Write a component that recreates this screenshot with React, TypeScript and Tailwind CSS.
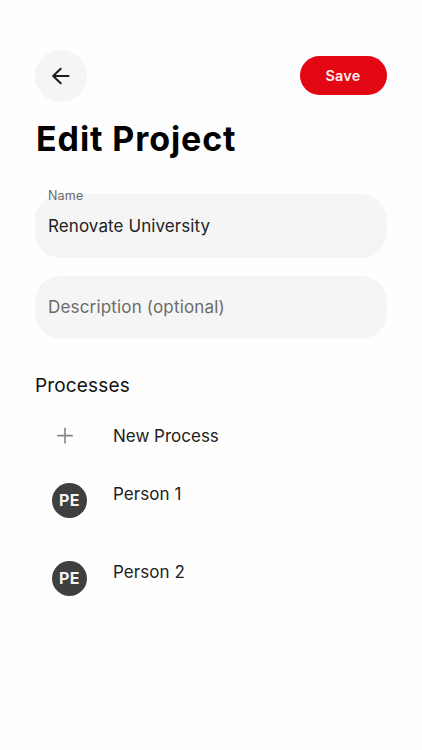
const PEOPLE = ['Person 1', 'Person 2']

export default function App() {
  return (
    <main className="h-[750px] w-[422px] bg-[#fefefe] px-[35px] pt-[50px] font-[Inter,sans-serif] text-[#222]">
      <header className="flex h-[51px] items-center justify-between">
        <button aria-label="Back" className="flex size-[52px] items-center justify-center rounded-full bg-[#f5f5f5]">
          <svg
            width="24"
            height="24"
            viewBox="0 0 24 24"
            fill="none"
            stroke="#1d1d1d"
            strokeWidth="2"
            strokeLinecap="round"
            strokeLinejoin="round"
          >
            <path d="M19.5 12H4.2M11.7 4.7L4.2 12l7.5 7.3" />
          </svg>
        </button>
        <button className="h-[39px] w-[87px] rounded-full bg-[#e30613] pr-px text-[14.5px] font-semibold tracking-[0.2px] text-white/95">
          Save
        </button>
      </header>
      <h1 className="mt-[16px] pl-px text-[34px] leading-[44px] font-[670] tracking-[0.9px] text-black">Edit Project</h1>
      <div className="mt-[33px] h-[64px] rounded-[26px] bg-[#f5f5f5] px-[13px]">
        <label className="block h-[20px] -translate-y-[7px] text-[12.5px] leading-[17px] tracking-[0.2px] text-[#6b6b6b]">
          Name
        </label>
        <p className="pt-px text-[17px] leading-[22px] font-[380] tracking-[0.09px]">Renovate University</p>
      </div>
      <div className="mt-[18px] flex h-[63px] items-center rounded-[26px] bg-[#f5f5f5] px-[13px] pt-px text-[17px] font-[380] tracking-[0.17px] text-[#6b6b6b]">
        Description (optional)
      </div>
      <h2 className="mt-[35px] text-[19px] leading-[24px] font-[380] tracking-[0.15px] text-[#111]">Processes</h2>
      <div className="mt-[26px] flex h-[24px] items-center">
        <svg className="mr-[35px] ml-[17px]" width="26" height="26" viewBox="0 0 26 26" stroke="#858585" strokeWidth="1.6">
          <path d="M5.2 12.6h15.6M13 4.8v15.6" />
        </svg>
        <span className="pt-px text-[17px] font-[380]">New Process</span>
      </div>
      <ul className="mt-[35px]">
        {PEOPLE.map((name) => (
          <li key={name} className="flex h-[78px] items-start">
            <span className="mr-[26px] ml-[17px] flex size-[35px] items-center justify-center rounded-full bg-[#3f3f3f] pb-px text-[16px] font-bold tracking-[0.4px] text-white/95">
              PE
            </span>
            <span className="text-[17px] leading-[22px] font-[380] tracking-[0.05px]">{name}</span>
          </li>
        ))}
      </ul>
    </main>
  )
}
